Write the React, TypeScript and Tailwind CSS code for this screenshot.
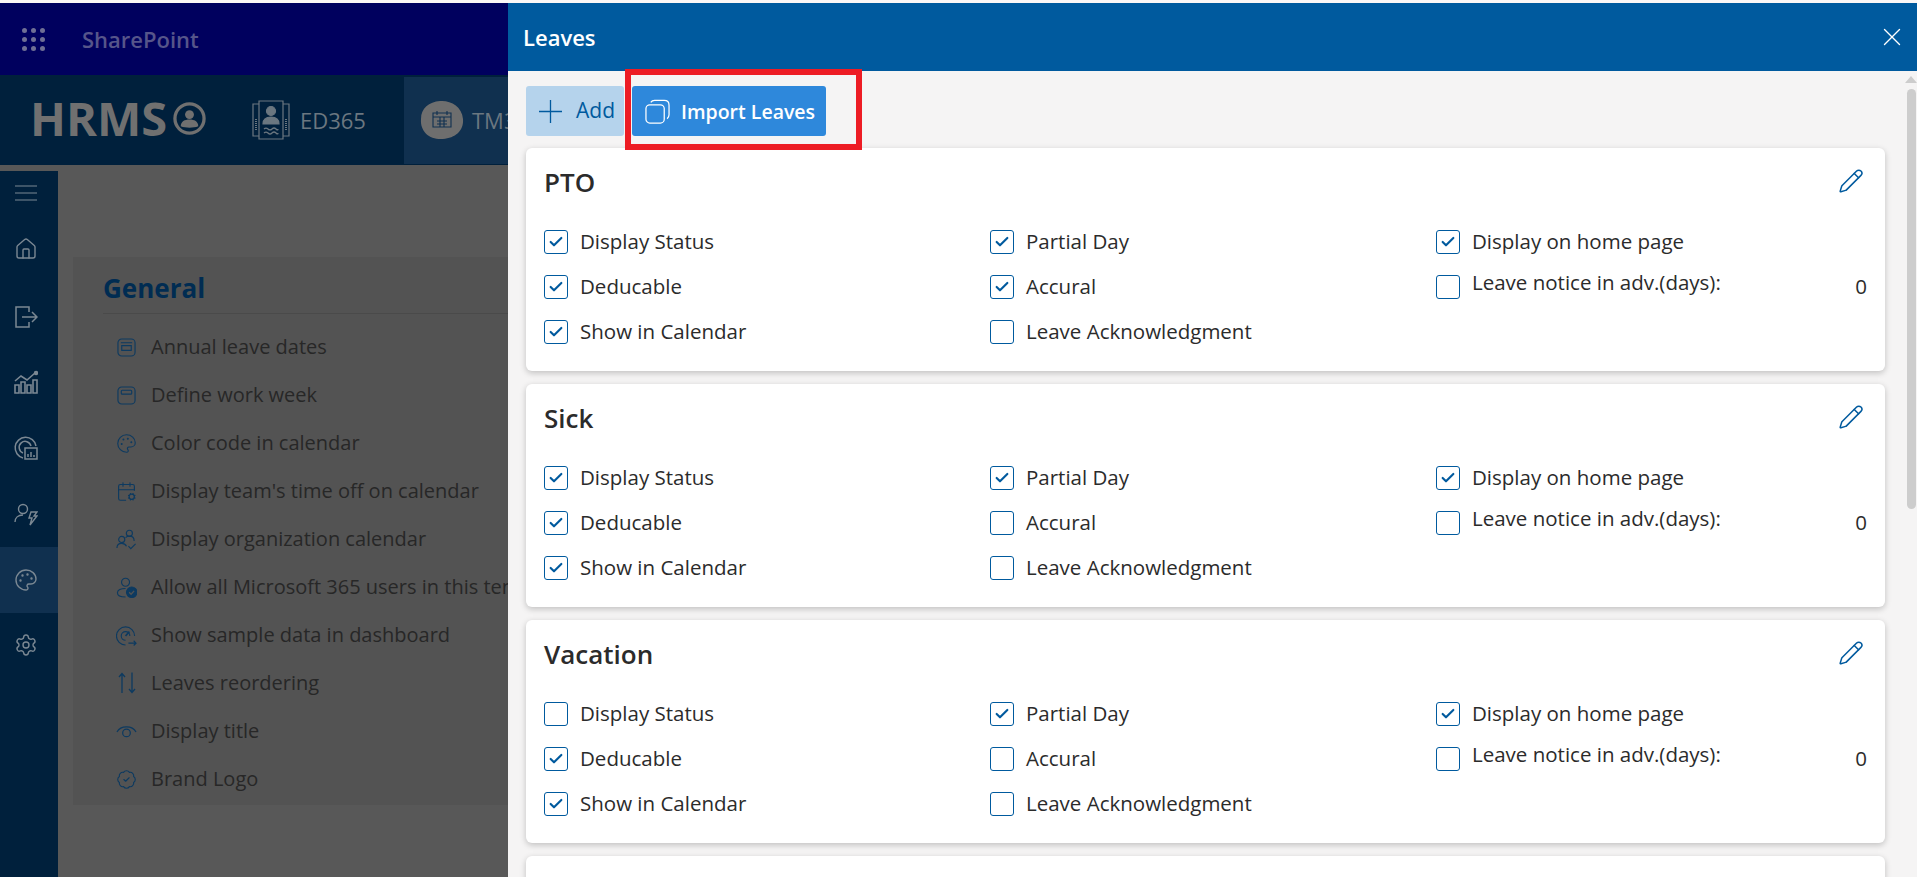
import { Check, Home, Palette, Pencil, Settings, X, BadgeCheck, CalendarCog } from "lucide-react";
import type { ReactNode } from "react";

const font = "font-['Open_Sans','Noto_Sans',sans-serif]";

type Leave = {
  name: string;
  status: boolean;
  deducable: boolean;
  calendar: boolean;
  partial: boolean;
  accural: boolean;
  ack: boolean;
  home: boolean;
};

const leaves: Leave[] = [
  { name: "PTO", status: true, deducable: true, calendar: true, partial: true, accural: true, ack: false, home: true },
  { name: "Sick", status: true, deducable: true, calendar: true, partial: true, accural: false, ack: false, home: true },
  { name: "Vacation", status: false, deducable: true, calendar: true, partial: true, accural: false, ack: false, home: true },
];

function Box({ checked }: { checked: boolean }) {
  return (
    <span className="w-6 h-6 shrink-0 rounded-[3px] border border-[#005a9e] flex items-center justify-center bg-white">
      {checked && <Check className="w-4 h-4 text-[#005a9e]" strokeWidth={3.2} />}
    </span>
  );
}

function Field({ label, checked }: { label: string; checked: boolean }) {
  return (
    <div className="h-[45px] flex items-center gap-[12px]">
      <Box checked={checked} />
      <span className="text-[20.5px] font-medium text-[#2b2b2b] whitespace-nowrap">{label}</span>
    </div>
  );
}

function LeaveCard({ leave }: { leave: Leave }) {
  return (
    <div className="h-[223px] shrink-0 bg-white rounded-md shadow-[0_2px_6px_rgba(0,0,0,0.22)] px-[18px] pt-4">
      <div className="h-[55px] flex items-start justify-between">
        <h2 className="text-[26px] leading-9 font-semibold text-[#2b2b2b]">{leave.name}</h2>
        <Pencil className="w-[26px] h-[26px] mt-1 mr-[3px] text-[#005a9e]" strokeWidth={1.4} />
      </div>
      <div className="grid grid-cols-[446px_446px_1fr]">
        <div>
          <Field label="Display Status" checked={leave.status} />
          <Field label="Deducable" checked={leave.deducable} />
          <Field label="Show in Calendar" checked={leave.calendar} />
        </div>
        <div>
          <Field label="Partial Day" checked={leave.partial} />
          <Field label="Accural" checked={leave.accural} />
          <Field label="Leave Acknowledgment" checked={leave.ack} />
        </div>
        <div>
          <Field label="Display on home page" checked={leave.home} />
          <div className="h-[45px] flex items-center gap-[12px]">
            <Box checked={false} />
            <span className="text-[20.5px] font-medium text-[#2b2b2b] -mt-[8px] whitespace-nowrap">Leave notice in adv.(days):</span>
            <span className="ml-auto text-[20.5px] font-medium text-[#2b2b2b]">0</span>
          </div>
        </div>
      </div>
    </div>
  );
}

function MenuIcon() {
  return (
    <svg viewBox="0 0 22 16" className="w-[22px] h-4" fill="none" stroke="currentColor" strokeWidth={1}>
      <path d="M0 1h22M0 8h22M0 15h22" />
    </svg>
  );
}

function DoorIcon() {
  return (
    <svg viewBox="0 0 24 24" className="w-6 h-6" fill="none" stroke="currentColor" strokeWidth={1.5}>
      <path d="M15 7V2H2v20h13v-5" />
      <path d="M8 12h15M18 7l5 5-5 5" />
    </svg>
  );
}

function ChartIcon() {
  return (
    <svg viewBox="0 0 24 24" className="w-6 h-6" fill="none" stroke="currentColor" strokeWidth={1.6}>
      <path d="M1 23v-8h4v8zM7 23v-11h4v11zM13 23v-8h4v8zM19 23v-13h4v13z" />
      <path d="M1 11l6-5 6 4 8-7" />
      <circle cx="22" cy="3" r="1.4" fill="currentColor" />
    </svg>
  );
}

function ReportIcon() {
  return (
    <svg viewBox="0 0 24 24" className="w-6 h-6" fill="none" stroke="currentColor" strokeWidth={1.5}>
      <path d="M9 22a10.5 10.5 0 1 1 13-12" />
      <path d="M9 17a6 6 0 1 1 8-7" />
      <path d="M11 12h12v11H11zM14 21v-3M17 21v-5M20 21v-2" />
    </svg>
  );
}

function UserBoltIcon() {
  return (
    <svg viewBox="0 0 24 24" className="w-6 h-6" fill="none" stroke="currentColor" strokeWidth={1.4}>
      <circle cx="9" cy="7" r="4.5" />
      <path d="M1 20c0-4 3-7 8-7" />
      <path d="M17 10h6l-3 4h3l-7 9 2-7h-3z" />
    </svg>
  );
}

function ContactsIcon() {
  return (
    <svg viewBox="0 0 38 40" className="w-[38px] h-[40px] shrink-0" fill="none" stroke="currentColor" strokeWidth={1.2}>
      <path d="M7 1h24v38H7z" />
      <path d="M7 4H1v32h6M31 4h6v32h-6" />
      <circle cx="19" cy="11" r="4.5" fill="currentColor" />
      <path d="M11 24c0-5 3-7 8-7s8 2 8 7z" fill="currentColor" />
      <path d="M12 29q2-2 4 0t4 0 4 0 2 0M12 33q2-2 4 0t4 0 4 0 2 0" />
      <path d="M4 19v12M34 19v12" strokeDasharray="1 1" strokeWidth={2} />
    </svg>
  );
}

function BlobCalendarIcon() {
  return (
    <svg viewBox="0 0 44 40" className="w-[44px] h-[40px] shrink-0">
      <path d="M20 1c10-1 22 5 23 18 1 12-8 19-20 20C10 40 0 32 1 19 1 8 9 2 20 1z" fill="#6e6e6e" />
      <path d="M13 13h18v14H13zM13 17h18M17 11v4M27 11v4M17 21h10M17 24h10M20 17v10M24 17v10" fill="none" stroke="#103050" strokeWidth={1.1} />
    </svg>
  );
}

function ProfileIcon() {
  return (
    <svg viewBox="0 0 34 34" className="w-[33px] h-[33px] ml-[6px] shrink-0" fill="none">
      <circle cx="17" cy="17" r="15" stroke="currentColor" strokeWidth={3.4} />
      <circle cx="17" cy="13" r="4.6" fill="currentColor" />
      <path d="M8 25c0-5 4-7 9-7s9 2 9 7c-5 2-13 2-18 0z" fill="currentColor" />
    </svg>
  );
}

const small = "w-[21px] h-[21px]";

function AnnualIcon() {
  return (
    <svg viewBox="0 0 20 20" className="w-[19px] h-[19px] ml-[1px]" fill="none" stroke="currentColor" strokeWidth={1.2}>
      <rect x="1" y="1" width="18" height="18" rx="4" />
      <path d="M4 5h12M5 8h10v5H5z" />
    </svg>
  );
}

function WeekIcon() {
  return (
    <svg viewBox="0 0 20 20" className="w-[19px] h-[19px] ml-[1px]" fill="none" stroke="currentColor" strokeWidth={1.2}>
      <rect x="1" y="1" width="18" height="18" rx="4" />
      <rect x="4.5" y="4.5" width="11" height="4" rx="1" />
    </svg>
  );
}

function OrgIcon() {
  return (
    <svg viewBox="0 0 22 22" className={small} fill="none" stroke="currentColor" strokeWidth={1.2}>
      <circle cx="14" cy="4.5" r="3.2" />
      <circle cx="6" cy="11" r="3.2" />
      <path d="M1 20c0-3 2-5 5-5s4 1 5 3M10 9c1-1 2-1.5 4-1.5 3 0 5 2 5 5" />
      <path d="M13 18l2.5 2.5 5-5" />
    </svg>
  );
}

function UserCheckIcon() {
  return (
    <svg viewBox="0 0 22 22" className={small} fill="none" stroke="currentColor" strokeWidth={1.2}>
      <circle cx="10" cy="5.5" r="4.2" />
      <path d="M10 12c-5 0-8.500 1.500-8.500 4.500S5 21 10 21" />
      <circle cx="16.500" cy="16" r="5.500" fill="currentColor" />
      <path d="M13.800 16l2 2 3.200-3.500" stroke="#525252" strokeWidth={1.4} />
    </svg>
  );
}

function DashGaugeIcon() {
  return (
    <svg viewBox="0 0 22 22" className={small} fill="none" stroke="currentColor" strokeWidth={1.2}>
      <path d="M10 21a9.500 9.500 0 1 1 9.500-9.500" />
      <path d="M10 16a4.500 4.500 0 1 1 4.500-4.500" />
      <path d="M10 11.500L14 7" strokeWidth={1.8} />
      <path d="M13 19h8M18.500 16.500L21 19l-2.500 2.500" />
    </svg>
  );
}

function ReorderIcon() {
  return (
    <svg viewBox="0 0 18 22" className="w-[18px] h-[22px] ml-[2px]" fill="none" stroke="currentColor" strokeWidth={1.3}>
      <path d="M4 21V1.500M1 5l3-3.500L7 5" />
      <path d="M14 .500V20M11 17l3 3.500 3-3.500" />
    </svg>
  );
}

function ArcEyeIcon() {
  return (
    <svg viewBox="0 0 22 16" className="w-[21px] h-4" fill="none" stroke="currentColor" strokeWidth={1.3}>
      <path d="M1 9a11 9 0 0 1 20 0" />
      <circle cx="11" cy="10" r="4" />
    </svg>
  );
}

function CopyIcon() {
  return (
    <svg viewBox="0 0 26 26" className="w-[25px] h-[25px] shrink-0" fill="none" stroke="currentColor" strokeWidth={1.3}>
      <rect x="1" y="6" width="19" height="19" rx="4" />
      <path d="M6 3.500c1-1.500 2-2 4-2h10c3 0 5 2 5 5v10c0 2-.8 3-2 4" />
    </svg>
  );
}

function NavButton({ children, active, height }: { children: ReactNode; active?: boolean; height: string }) {
  return (
    <div className={`${height} flex items-center justify-center pr-[6px] text-[#7b8893] ${active ? "bg-[#10304f]" : ""}`}>
      {children}
    </div>
  );
}

const generalItems: { icon: ReactNode; label: string }[] = [
  { icon: <AnnualIcon />, label: "Annual leave dates" },
  { icon: <WeekIcon />, label: "Define work week" },
  { icon: <Palette className={small} strokeWidth={1.3} />, label: "Color code in calendar" },
  { icon: <CalendarCog className={small} strokeWidth={1.3} />, label: "Display team's time off on calendar" },
  { icon: <OrgIcon />, label: "Display organization calendar" },
  { icon: <UserCheckIcon />, label: "Allow all Microsoft 365 users in this tenant" },
  { icon: <DashGaugeIcon />, label: "Show sample data in dashboard" },
  { icon: <ReorderIcon />, label: "Leaves reordering" },
  { icon: <ArcEyeIcon />, label: "Display title" },
  { icon: <BadgeCheck className={small} strokeWidth={1.3} />, label: "Brand Logo" },
];

export default function App() {
  return (
    <div className={`${font} h-[877px] w-full overflow-hidden bg-[#fbf7f6] pt-[3px] flex`}>
      {/* dimmed page behind the panel */}
      <div className="w-[508px] shrink-0 overflow-hidden flex flex-col bg-[#585858]">
        <div className="h-[72px] shrink-0 bg-[#00005e] flex items-center">
          <div className="ml-[22px] grid grid-cols-3 gap-[4px]">
            {Array.from({ length: 9 }).map((_, i) => (
              <span key={i} className="w-[5px] h-[5px] rounded-full bg-[#6f6f95]" />
            ))}
          </div>
          <span className="ml-[37px] text-[22px] font-semibold text-[#56558a]">SharePoint</span>
        </div>
        <div className="h-[90px] shrink-0 bg-[#00203c] flex items-center">
          <div className="ml-[30px] w-[207px] -mt-[3px] flex items-center text-[#707070]">
            <span className="text-[47px] leading-none font-bold">HRMS</span>
            <ProfileIcon />
          </div>
          <div className="ml-[15px] w-[152px] flex items-center gap-[10px] text-[#6b7780]">
            <ContactsIcon />
            <span className="text-[22px]">ED365</span>
          </div>
          <div className="h-[87px] flex-1 bg-[#10304f] flex items-center pl-4 gap-2 text-[#6b7780] overflow-hidden">
            <BlobCalendarIcon />
            <span className="text-[22px]">TM365</span>
          </div>
        </div>
        <div className="flex-1 flex min-h-0">
          <div className="w-[58px] shrink-0 bg-[#00203c] mt-[6px] flex flex-col">
            <NavButton height="h-[43px]"><MenuIcon /></NavButton>
            <NavButton height="h-[70px]"><Home className="w-6 h-6" strokeWidth={1.4} /></NavButton>
            <NavButton height="h-[65px]"><DoorIcon /></NavButton>
            <NavButton height="h-[66px]"><ChartIcon /></NavButton>
            <NavButton height="h-[66px]"><ReportIcon /></NavButton>
            <NavButton height="h-[66px]"><UserBoltIcon /></NavButton>
            <NavButton height="h-[66px]" active><Palette className="w-6 h-6" strokeWidth={1.4} /></NavButton>
            <NavButton height="h-[64px]"><Settings className="w-6 h-6" strokeWidth={1.4} /></NavButton>
          </div>
          <div className="flex-1 min-w-0 pl-[15px] pt-[92px]">
            <div className="h-[548px] bg-[#535353] pl-[30px] overflow-hidden">
              <h2 className="h-[57px] pt-[15px] border-b border-[#4a4a4a] text-[26px] leading-8 font-bold text-[#002c52]">General</h2>
              <div className="pt-[9px]">
                {generalItems.map((item) => (
                  <div key={item.label} className="h-12 flex items-center whitespace-nowrap">
                    <span className="w-[48px] pl-[13px] shrink-0 text-[#0d3a60] flex">{item.icon}</span>
                    <span className="text-[20px] text-[#272727]">{item.label}</span>
                  </div>
                ))}
              </div>
            </div>
          </div>
        </div>
      </div>

      {/* Leaves panel */}
      <div className="flex-1 min-w-0 flex flex-col bg-[#f5f4f4] relative">
        <div className="h-[68px] shrink-0 bg-[#005a9e] flex items-center justify-between pl-[15px] pr-[12px]">
          <span className="text-[22px] font-semibold text-white">Leaves</span>
          <X className="w-[30px] h-[30px] -mr-[2px] text-white" strokeWidth={1.1} />
        </div>
        <div className="flex-1 min-h-0 flex">
          <div className="flex-1 min-w-0 pl-[18px] pr-[20px] pt-[15px] flex flex-col gap-[13px] overflow-hidden">
            <div className="h-[50px] shrink-0 flex gap-2 -mb-[1px]">
              <button className="w-[98px] rounded-[3px] bg-[#b5d3ec] flex items-center gap-[14px] pl-[13px] text-[#005a9e]">
                <svg viewBox="0 0 23 23" className="w-[23px] h-[23px] shrink-0" fill="none" stroke="currentColor" strokeWidth={1.3}>
                  <path d="M11.500 0v23M0 11.500h23" />
                </svg>
                <span className="text-[21px] font-medium">Add</span>
              </button>
              <button className="w-[194px] rounded-[3px] bg-[#2e88db] flex items-center gap-[11px] pl-[13px] text-white">
                <CopyIcon />
                <span className="text-[19.5px] font-semibold pt-[2px]">Import Leaves</span>
              </button>
            </div>
            {leaves.map((leave) => (
              <LeaveCard key={leave.name} leave={leave} />
            ))}
            <LeaveCard leave={leaves[0]} />
          </div>
          <div className="w-3 shrink-0 flex flex-col items-center pt-[5px]">
            <span className="w-0 h-0 border-x-[6px] border-x-transparent border-b-[7px] border-b-[#cdcdcd]" />
            <span className="mt-[6px] w-[9px] h-[420px] rounded-full bg-[#cdcdcd]" />
          </div>
        </div>
        {/* red annotation round the import button */}
        <div className="absolute left-[117px] top-[66px] w-[237px] h-[81px] border-[6px] border-[#ed1c24]" />
      </div>
    </div>
  );
}
